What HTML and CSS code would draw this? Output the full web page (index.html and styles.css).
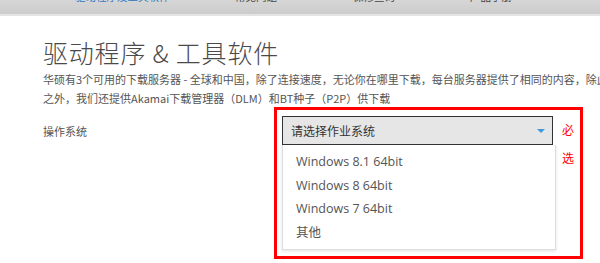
FILE: index.html
```html
<!DOCTYPE html>
<html lang="zh-CN">
<head>
<meta charset="UTF-8">
<meta name="viewport" content="width=device-width, initial-scale=1.0">
<title>驱动程序 &amp; 工具软件</title>
<link rel="stylesheet" href="styles.css">
</head>
<body>
  <nav class="topbar">
    <ul>
      <li class="active">驱动程序及工具软件</li>
      <li>常见问题</li>
      <li>保修查询</li>
      <li>产品手册</li>
    </ul>
  </nav>
  <div class="content">
    <h1>驱动程序 &amp; 工具软件</h1>
    <p class="intro">华硕有3个可用的下载服务器 - 全球和中国，除了连接速度，无论你在哪里下载，每台服务器提供了相同的内容，除此<br>之外，我们还提供Akamai下载管理器（DLM）和BT种子（P2P）供下载</p>
    <div class="form-row">
      <label class="field-label">操作系统</label>
      <div class="highlight">
        <div class="select-wrap">
          <div class="select">
            <span>请选择作业系统</span>
            <i class="arrow"></i>
          </div>
          <ul class="options">
            <li>Windows 8.1 64bit</li>
            <li>Windows 8 64bit</li>
            <li>Windows 7 64bit</li>
            <li>其他</li>
          </ul>
        </div>
        <span class="required">必选</span>
      </div>
    </div>
  </div>
</body>
</html>
```
FILE: styles.css
```css
body { margin: 0; background: #fff; color: #555; font-family: "Noto Sans CJK SC", "Noto Sans", sans-serif; overflow: hidden; }
.topbar { height: 14px; overflow: hidden; background: linear-gradient(#d6d6d6, #cccccc); border-bottom: 2px solid #e4e4e4; }
.topbar ul { list-style: none; margin: -11px 0 0 0; padding: 0 0 0 75px; display: flex; font-size: 10.5px; line-height: 16px; }
.topbar li { color: #444; white-space: nowrap; }
.topbar li.active { color: #2a78c2; width: 160px; }
.topbar li:nth-child(2) { width: 118px; }
.topbar li:nth-child(3) { width: 117px; }
.content { padding: 0 0 0 43px; }
h1 { margin: 20px 0 0; font-size: 25px; font-weight: 300; color: #4a4a4a; line-height: 32px; letter-spacing: 0.8px; }
.intro { margin: 2px 0 0; font-size: 11px; line-height: 19px; white-space: nowrap; color: #555; }
.form-row { display: flex; margin-top: -1px; }
.field-label { width: 231px; font-size: 11px; line-height: 16px; padding-top: 16px; color: #555; }
.highlight { display: flex; border: 3px solid #f00; padding: 6px 5px 6px 5px; width: 293px; }
.select-wrap { width: 271px; }
.select { height: 27px; border: 1px solid #333; background: #e6e6e6; display: flex; align-items: center; justify-content: space-between; padding: 0 7px 0 8px; font-size: 12px; color: #333; }
.arrow { width: 0; height: 0; border-left: 4px solid transparent; border-right: 4px solid transparent; border-top: 4px solid #3d9ae0; margin-top: 1px; }
.options { list-style: none; margin: 0 -3px 0 0; padding: 5px 0 5px 13px; background: #fff; border: 1px solid #ddd; border-top: none; box-shadow: 0 1px 3px rgba(0,0,0,0.12); }
.options li { height: 23.5px; line-height: 23.5px; font-size: 12.5px; color: #555; font-family: "Open Sans", "Noto Sans CJK SC", sans-serif; }
.required { width: 12px; margin-left: 9px; font-size: 12px; line-height: 28px; color: #f00; }
```
